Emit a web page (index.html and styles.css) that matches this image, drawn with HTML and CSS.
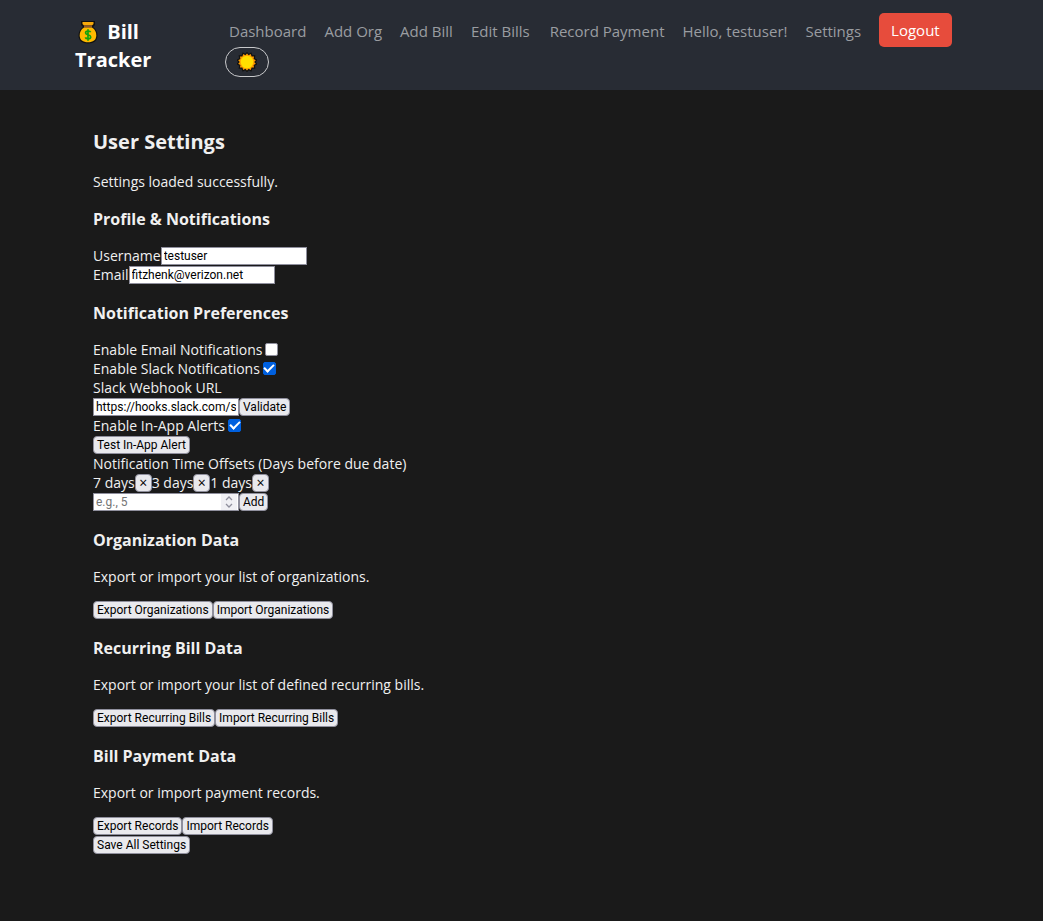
FILE: index.html
```html
<!DOCTYPE html>
<html lang="en">
<head>
<meta charset="utf-8">
<title>Bill Tracker - User Settings</title>
<link rel="stylesheet" href="styles.css">
</head>
<body>
<header class="navbar">
  <div class="navbar-inner">
    <a class="brand" href="#">
      <svg class="brand-icon" viewBox="0 0 20 24" aria-hidden="true">
        <path d="M3 1H17V5L15 7C18 9 19.5 12 19.5 15.5C19.5 20.5 16 23.5 10 23.5S.5 20.5 .5 15.5C.5 12 2 9 5 7L3 5Z" fill="#111"/>
        <path d="M4.500 2H15.500V4L14 5.500H6L4.500 4Z" fill="#f7a90b"/>
        <path d="M6 5.500H14V7.500H6Z" fill="#8d562e"/>
        <path d="M6 7.500H14C17 9.500 18.300 12 18.300 15.500C18.300 20 15 22.300 10 22.300S1.700 20 1.700 15.500C1.700 12 3 9.500 6 7.500Z" fill="#ffb900"/>
        <path d="M12.600 12.200C12 10.500 7.600 10.500 7.600 12.900C7.600 15.300 12.700 14.300 12.700 16.900C12.700 19.300 8 19.200 7.300 17.400M10 9.200V20.800" fill="none" stroke="#13a10e" stroke-width="1.700"/>
      </svg>
      Bill Tracker
    </a>
    <nav class="nav">
      <a class="nav-link" href="#">Dashboard</a>
      <a class="nav-link" href="#">Add Org</a>
      <a class="nav-link" href="#">Add Bill</a>
      <a class="nav-link" href="#">Edit Bills</a>
      <a class="nav-link nav-link-spaced" href="#">Record Payment</a>
      <span class="nav-link">Hello, testuser!</span>
      <a class="nav-link" href="#">Settings</a>
      <button class="logout" type="button">Logout</button>
      <button class="theme-toggle" type="button" aria-label="Toggle theme">
        <svg class="sun-icon" viewBox="-10 -10 20 20" aria-hidden="true">
          <path d="M0-8.500 1.600-6.800 3.700-8 4.600-5.600 7-5.600 6.600-3 8.800-1.800 7.200 0 8.800 1.800 6.600 3 7 5.600 4.600 5.600 3.700 8 1.600 6.800 0 8.500-1.600 6.800-3.700 8-4.600 5.600-7 5.600-6.600 3-8.800 1.800-7.200 0-8.800-1.800-6.600-3-7-5.600-4.600-5.600-3.700-8-1.600-6.800Z" fill="#ff9c00" stroke="#111" stroke-width="2.400" paint-order="stroke"/>
          <circle r="6.300" fill="#ffde00"/>
        </svg>
      </button>
    </nav>
  </div>
</header>
<main class="content">
  <h2 class="page-title">User Settings</h2>
  <p class="text">Settings loaded successfully.</p>
  <form>
    <h3 class="section-title">Profile &amp; Notifications</h3>
    <div class="row"><label for="username">Username</label><input class="field" id="username" type="text" value="testuser"></div>
    <div class="row"><label for="email">Email</label><input class="field" id="email" type="email" value="fitzhenk@verizon.net"></div>

    <h3 class="section-title">Notification Preferences</h3>
    <div class="row"><label for="email-on">Enable Email Notifications</label><input class="check" id="email-on" type="checkbox"></div>
    <div class="row"><label for="slack-on">Enable Slack Notifications</label><input class="check" id="slack-on" type="checkbox" checked></div>
    <div class="row"><label for="webhook">Slack Webhook URL</label></div>
    <div class="row"><input class="field" id="webhook" type="text" value="https://hooks.slack.com/services/"><button class="btn" type="button">Validate</button></div>
    <div class="row"><label for="app-on">Enable In-App Alerts</label><input class="check" id="app-on" type="checkbox" checked></div>
    <div class="row"><button class="btn" type="button">Test In-App Alert</button></div>
    <div class="row"><label for="offset">Notification Time Offsets (Days before due date)</label></div>
    <div class="row">
      <span>7 days</span><button class="btn btn-remove" type="button" aria-label="Remove 7 days">×</button>
      <span>3 days</span><button class="btn btn-remove" type="button" aria-label="Remove 3 days">×</button>
      <span>1 days</span><button class="btn btn-remove" type="button" aria-label="Remove 1 days">×</button>
    </div>
    <div class="row">
      <span class="number-box">
        <input class="field" id="offset" type="number" placeholder="e.g., 5">
        <svg class="spinner" viewBox="0 0 16 16" aria-hidden="true"><path d="M5 6 8 3 11 6M5 10 8 13 11 10" fill="none" stroke="#8f8f9d" stroke-width="1.300"/></svg>
      </span><button class="btn" type="button">Add</button>
    </div>

    <h3 class="section-title">Organization Data</h3>
    <p class="text data-text">Export or import your list of organizations.</p>
    <div class="row"><button class="btn" type="button">Export Organizations</button><button class="btn" type="button">Import Organizations</button></div>

    <h3 class="section-title">Recurring Bill Data</h3>
    <p class="text data-text">Export or import your list of defined recurring bills.</p>
    <div class="row"><button class="btn" type="button">Export Recurring Bills</button><button class="btn" type="button">Import Recurring Bills</button></div>

    <h3 class="section-title">Bill Payment Data</h3>
    <p class="text data-text">Export or import payment records.</p>
    <div class="row"><button class="btn" type="button">Export Records</button><button class="btn" type="button">Import Records</button></div>
    <div class="row"><button class="btn" type="submit">Save All Settings</button></div>
  </form>
</main>
</body>
</html>
```
FILE: styles.css
```css
* { box-sizing: border-box; }

body {
  margin: 0;
  background: #1a1a1a;
  color: #f0f0f0;
  font: 14px/19px "Segoe UI", "Open Sans", "Noto Sans", sans-serif;
}

button, input { font-family: inherit; }

.navbar { background: #282c34; padding: 13px 75px 13px; }
.navbar-inner { display: flex; align-items: flex-start; gap: 66px; }

.brand {
  flex: none;
  width: 84px;
  padding-top: 5px;
  color: #fff;
  font-size: 20px;
  font-weight: 700;
  line-height: 28px;
  text-decoration: none;
}
.brand-icon { width: 20px; height: 24px; margin: 0 4px 0 3px; vertical-align: -5px; }

.nav { display: flex; flex-wrap: wrap; align-items: center; column-gap: 18px; }
.nav-link {
  padding-top: 2px;
  color: #9a9da1;
  font-size: 15px;
  line-height: 32px;
  text-decoration: none;
  white-space: nowrap;
}
.nav-link:first-child { margin-left: 4px; }
.nav-link-spaced { margin-left: 2px; }

.logout {
  height: 34px;
  padding: 0 12px;
  border: 0;
  border-radius: 5px;
  background: #e74c3c;
  color: #fff;
  font-size: 15px;
}
.theme-toggle {
  display: grid;
  place-items: center;
  width: 44px;
  height: 30px;
  padding: 0;
  border: 1px solid #c8c9cb;
  border-radius: 15px;
  background: transparent;
}
.sun-icon { width: 20px; height: 20px; }

.content { padding: 38px 93px 64px; }
.page-title { margin: 0 0 16px; font-size: 20px; line-height: 28px; }
.section-title { margin: 18px 0 16px; font-size: 16px; line-height: 22px; }
.section-title:first-child { margin-top: 17px; }
.text { margin: 0; }
.data-text { margin-bottom: 14px; }

.row { display: flex; align-items: center; height: 19px; }

.field {
  width: 146px;
  height: 18px;
  padding: 0 2px;
  border: 1px solid #8f8f9d;
  background: #fff;
  color: #000;
  font-family: Roboto, sans-serif;
  font-size: 12px;
}
.field::placeholder { color: #757575; }
.field[type="number"] { appearance: textfield; }
.field::-webkit-inner-spin-button { appearance: none; }

.number-box { display: grid; grid-template-columns: 146px; align-items: center; }
.number-box > * { grid-row: 1; grid-column: 1; }
.spinner { width: 16px; height: 16px; margin-right: 2px; justify-self: end; background: #f0f0f4; }

.check {
  appearance: none;
  width: 13px;
  height: 13px;
  margin: 0 3px;
  border: 1px solid #8f8f9d;
  border-radius: 2px;
  background: #fff;
}
.check:checked {
  display: grid;
  place-items: center;
  border-color: #0060df;
  background: #0060df;
}
.check:checked::after {
  content: "";
  width: 8px;
  height: 4px;
  margin-bottom: 3px;
  border: solid #fff;
  border-width: 0 0 2px 2px;
  rotate: -45deg;
}

.btn {
  height: 18px;
  padding: 0 3px;
  border: 1px solid #8f8f9d;
  border-radius: 4px;
  background: #e9e9ed;
  color: #000;
  font-family: Roboto, sans-serif;
  font-size: 12px;
  line-height: 16px;
  white-space: nowrap;
}
.btn-remove { width: 17px; font-family: inherit; font-size: 14px; }
```
